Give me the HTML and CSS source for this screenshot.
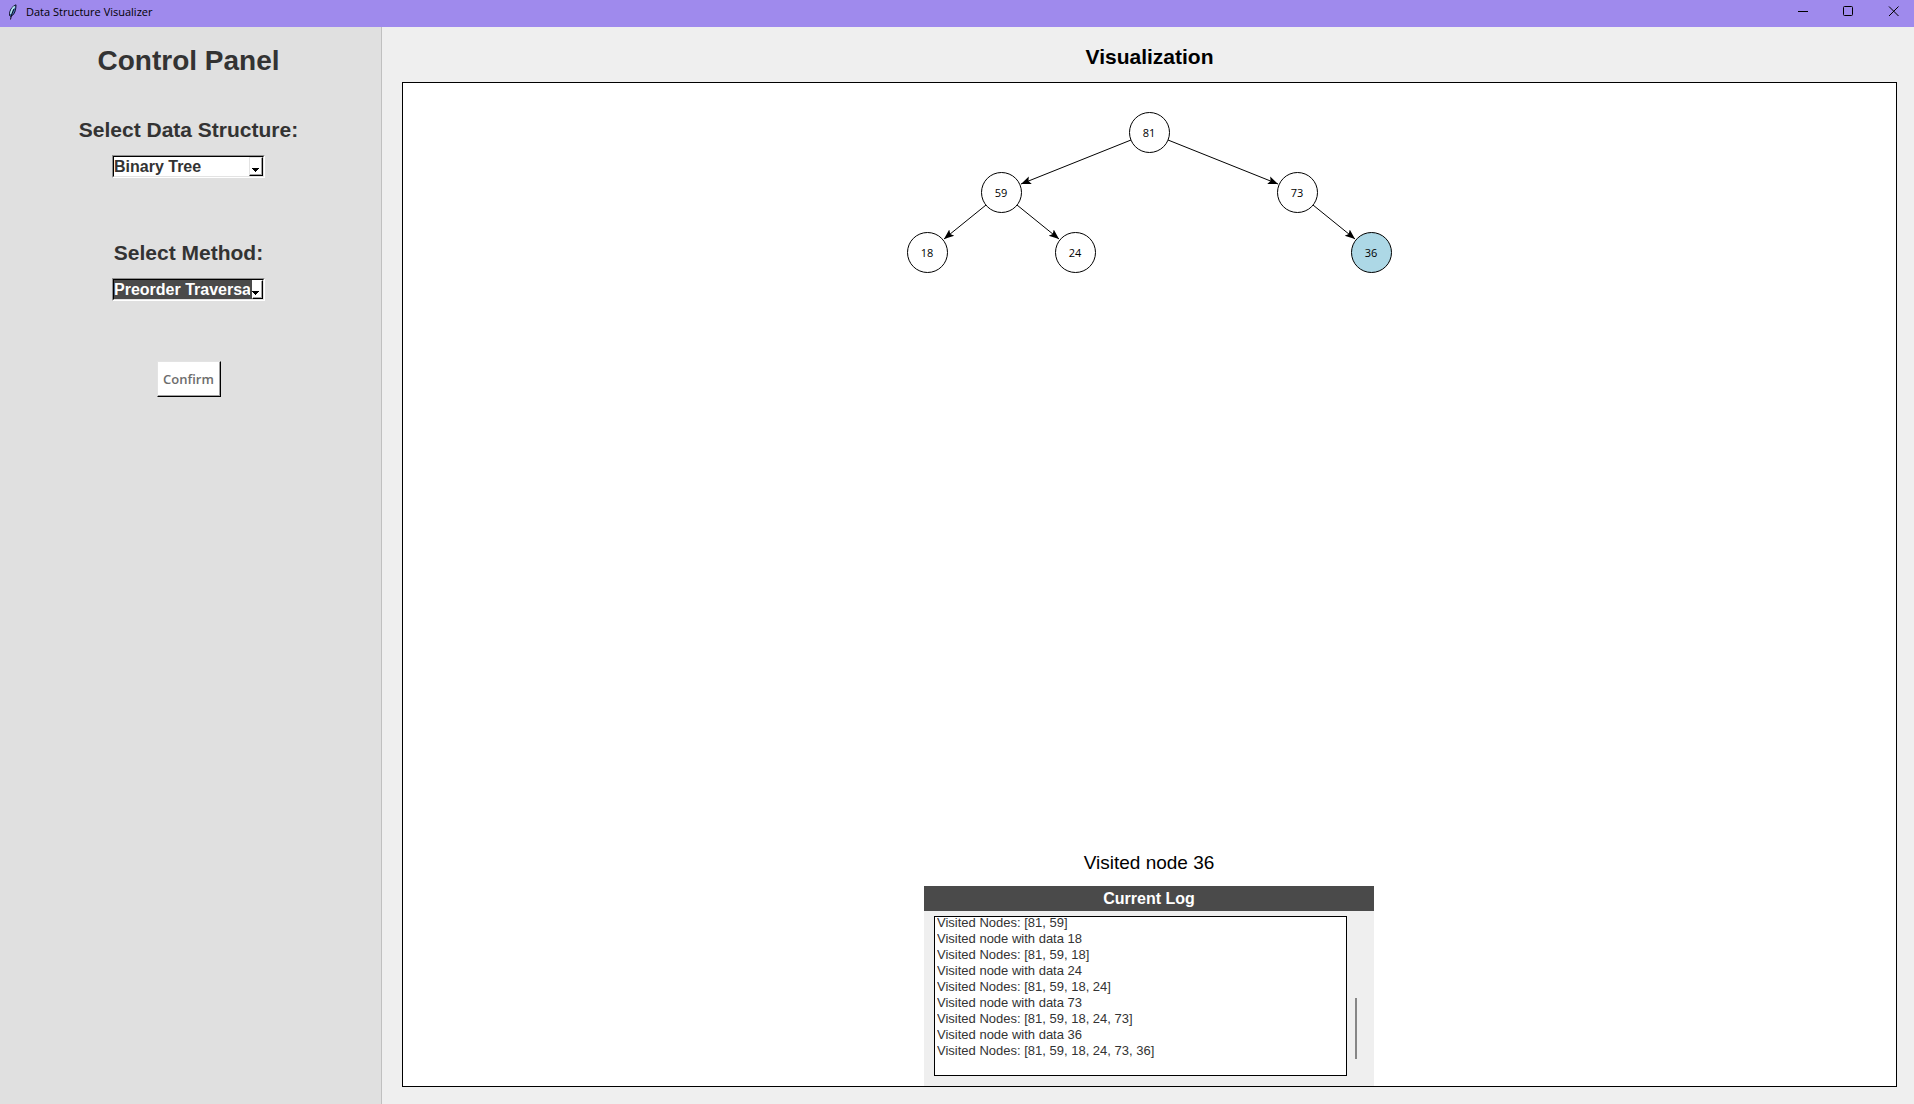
FILE: index.html
```html
<!DOCTYPE html>
<html lang="en">
<head>
<meta charset="utf-8">
<meta name="viewport" content="width=device-width, initial-scale=1">
<title>Data Structure Visualizer</title>
<link rel="stylesheet" href="styles.css">
</head>
<body>
<header class="titlebar">
  <svg class="titlebar-icon" width="10" height="16" viewBox="0 0 10 16" aria-hidden="true">
    <path d="M8 .8 C5 2 2.500 4.500 1.800 8 L1.500 11.500 L3 12.500 C5.500 11 7.500 8 7.800 4 Z" fill="#3f74b8" stroke="#14142c" stroke-width="1"/>
    <path d="M6.800 2.500 C4.500 4 3.200 7 2.600 10" fill="none" stroke="#b4e6ee" stroke-width="1.500"/>
    <path d="M6 5 C4.500 8 3.300 11 2.500 15.500" fill="none" stroke="#0b0b18" stroke-width="1"/>
  </svg>
  <span class="titlebar-text">Data Structure Visualizer</span>
  <div class="window-buttons">
    <button type="button" aria-label="Minimize"><svg width="11" height="11" viewBox="0 0 11 11"><path d="M0 5.500H10"/></svg></button>
    <button type="button" aria-label="Maximize"><svg width="11" height="11" viewBox="0 0 11 11"><rect x=".5" y=".5" width="9" height="9" rx="1"/></svg></button>
    <button type="button" aria-label="Close"><svg width="11" height="11" viewBox="0 0 11 11"><path d="M1 .5L10.500 10M10.500 .5L1 10"/></svg></button>
  </div>
</header>
<div class="workspace">
  <aside class="sidebar">
    <h1>Control Panel</h1>
    <div class="field">
      <label for="structure">Select Data Structure:</label>
      <div class="combo">
        <select id="structure"><option>Binary Tree</option></select>
        <span class="combo-arrow"><svg width="7" height="4" viewBox="0 0 7 4"><path d="M0 0H7V1H6V2H5V3H4V4H3V3H2V2H1V1H0Z"/></svg></span>
      </div>
    </div>
    <div class="field">
      <label for="method">Select Method:</label>
      <div class="combo combo-active">
        <select id="method"><option>Preorder Traversal</option></select>
        <span class="combo-arrow"><svg width="7" height="4" viewBox="0 0 7 4"><path d="M0 0H7V1H6V2H5V3H4V4H3V3H2V2H1V1H0Z"/></svg></span>
      </div>
    </div>
    <button type="button" class="confirm" disabled>Confirm</button>
  </aside>
  <main class="main">
    <h2>Visualization</h2>
    <section class="canvas">
      <svg class="tree" width="600" height="200" viewBox="0 0 600 200" role="img" aria-label="Binary tree">
        <defs>
          <marker id="arrow" markerUnits="userSpaceOnUse" markerWidth="12" markerHeight="10" refX="10" refY="5" orient="auto">
            <path d="M10 5L0 1L2 5L0 9Z"/>
          </marker>
        </defs>
        <g class="edges">
          <path d="M282 57L172 101"/>
          <path d="M319 57L429 101"/>
          <path d="M137 122L95 156"/>
          <path d="M168 122L210 156"/>
          <path d="M464 122L506 156"/>
        </g>
        <g class="nodes">
          <circle cx="300.500" cy="49.500" r="20"/><text x="300" y="54">81</text>
          <circle cx="152.500" cy="109.500" r="20"/><text x="152" y="114">59</text>
          <circle cx="448.500" cy="109.500" r="20"/><text x="448" y="114">73</text>
          <circle cx="78.500" cy="169.500" r="20"/><text x="78" y="174">18</text>
          <circle cx="226.500" cy="169.500" r="20"/><text x="226" y="174">24</text>
          <circle class="current" cx="522.500" cy="169.500" r="20"/><text x="522" y="174">36</text>
        </g>
      </svg>
      <div class="output">
        <p class="status">Visited node 36</p>
        <section class="log">
          <h3>Current Log</h3>
          <div class="log-body">
            <div class="log-lines" role="log">
              <p>Visited Nodes: [81, 59]</p>
              <p>Visited node with data 18</p>
              <p>Visited Nodes: [81, 59, 18]</p>
              <p>Visited node with data 24</p>
              <p>Visited Nodes: [81, 59, 18, 24]</p>
              <p>Visited node with data 73</p>
              <p>Visited Nodes: [81, 59, 18, 24, 73]</p>
              <p>Visited node with data 36</p>
              <p>Visited Nodes: [81, 59, 18, 24, 73, 36]</p>
              <p></p>
            </div>
            <div class="scrollbar"><div class="thumb"></div></div>
          </div>
        </section>
      </div>
    </section>
  </main>
</div>
</body>
</html>
```
FILE: styles.css
```css
* { box-sizing: border-box; }

body {
  margin: 0;
  min-height: 100vh;
  display: flex;
  flex-direction: column;
  background: #efefef;
  color: #000;
  font-family: "Liberation Sans", Arial, sans-serif;
}

h1, h2, h3, p { margin: 0; }

.titlebar {
  display: flex;
  align-items: center;
  height: 27px;
  padding: 0 0 4px 8px;
  background: #9f8aed;
}
.titlebar-icon { margin-right: 8px; }
.titlebar-text {
  font: 11px/16px "Open Sans", "Noto Sans", sans-serif;
}
.window-buttons {
  display: flex;
  gap: 4px;
  margin-left: auto;
}
.window-buttons button {
  width: 41px;
  height: 23px;
  padding: 0;
  border: 0;
  background: none;
  display: flex;
  align-items: center;
  justify-content: center;
}
.window-buttons svg {
  fill: none;
  stroke: #000;
}

.workspace {
  flex: 1;
  display: flex;
}

.sidebar {
  flex: none;
  width: 382px;
  padding: 18px 4px 16px 0;
  display: flex;
  flex-direction: column;
  align-items: center;
  background: #e0e0e0;
  border-right: 1px solid #c0c0c0;
  color: #333;
}
.sidebar h1 {
  margin-bottom: 41px;
  font-size: 28px;
  line-height: 32px;
}
.field {
  display: flex;
  flex-direction: column;
  align-items: center;
  gap: 13px;
  margin-bottom: 63px;
}
.field label {
  font-size: 21px;
  font-weight: bold;
  line-height: 24px;
}
.combo {
  position: relative;
  width: 153px;
  height: 23px;
  border: 1px solid;
  border-color: #909090 #fff #fff #909090;
}
.combo select {
  display: block;
  width: 100%;
  height: 21px;
  padding: 0 13px 0 0;
  border: 1px solid;
  border-color: #000 #e3e3e3 #e3e3e3 #000;
  border-radius: 0;
  outline: 0;
  appearance: none;
  background: #fff;
  color: #333;
  font: bold 16px/18px "Liberation Sans", Arial, sans-serif;
}
.combo-arrow {
  position: absolute;
  top: 1px;
  right: 1px;
  bottom: 1px;
  width: 14px;
  padding: 0 3px 3px 0;
  display: flex;
  align-items: flex-end;
  justify-content: flex-end;
  background: #fff;
  border: 1px solid;
  border-color: #e3e3e3 #000 #000 #e3e3e3;
  box-shadow: inset -1px -1px #a0a0a0;
  pointer-events: none;
}
.combo-arrow svg { flex: none; }
.combo-active select {
  background: #4a4a4a;
  color: #fff;
}
.combo-active .combo-arrow {
  width: 11px;
  border-color: #fff #000 #000 #fff;
}

.confirm {
  width: 64px;
  height: 36px;
  margin-top: -3px;
  padding: 0;
  border: 1px solid;
  border-color: #e3e3e3 #000 #000 #e3e3e3;
  box-shadow: inset -1px -1px #a0a0a0;
  background: #fff;
  color: #6d6d6d;
  font: 600 13px/18px "Open Sans", "Noto Sans", sans-serif;
}

.main {
  flex: 1;
  min-width: 0;
  padding: 17px 17px 17px 20px;
  display: flex;
  flex-direction: column;
}
.main h2 {
  margin-bottom: 13px;
  font-size: 21px;
  line-height: 25px;
  text-align: center;
}
.canvas {
  flex: 1;
  padding-right: 1px;
  display: flex;
  flex-direction: column;
  align-items: center;
  background: #fff;
  border: 1px solid #000;
}
.tree { display: block; }
.edges {
  fill: none;
  stroke: #000;
}
.edges path { marker-end: url(#arrow); }
.nodes circle {
  fill: #fff;
  stroke: #000;
}
.nodes .current { fill: #add8e6; }
.nodes text {
  font: 11px "Open Sans", "Noto Sans", sans-serif;
  text-anchor: middle;
}

.output {
  width: 450px;
  margin-top: auto;
  text-align: center;
}
.status {
  margin-bottom: 12px;
  font-size: 19px;
  line-height: 22px;
}
.log { background: #efefef; }
.log h3 {
  background: #4a4a4a;
  color: #fff;
  font-size: 16px;
  line-height: 25px;
}
.log-body {
  display: flex;
  gap: 8px;
  padding: 5px 17px 10px 10px;
}
.log-lines {
  flex: 1;
  height: 160px;
  padding: 1px 2px 0;
  display: flex;
  flex-direction: column;
  justify-content: flex-end;
  overflow: clip;
  overflow-clip-margin: content-box;
  background: #fff;
  border: 1px solid #000;
  color: #333;
  font-size: 13px;
  line-height: 16px;
  text-align: left;
}
.log-lines p {
  flex: none;
  height: 16px;
}
.scrollbar {
  width: 2px;
  display: flex;
  align-items: flex-end;
  padding-bottom: 17px;
}
.thumb {
  width: 2px;
  height: 61px;
  background: #868686;
}
```
